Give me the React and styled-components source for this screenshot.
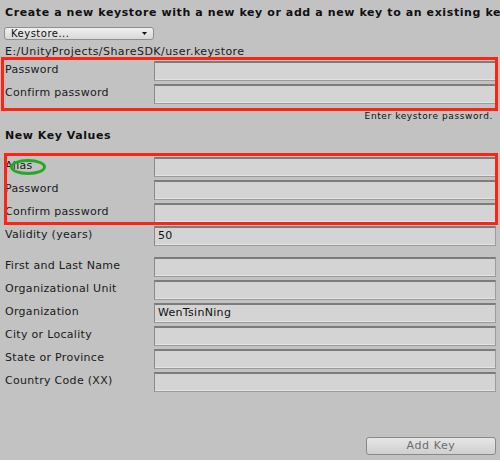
import React from 'react'
import styled, { createGlobalStyle } from 'styled-components'

const GlobalStyle = createGlobalStyle`
  html, body {
    margin: 0;
    padding: 0;
    background: #c2c2c2;
  }
  body {
    font-family: "DejaVu Sans", Verdana, sans-serif;
    font-size: 11px;
    letter-spacing: 0.3px;
    color: #1a1a1a;
  }
`;

const Window = styled.div`
  position: relative;
  width: 500px;
  height: 460px;
  overflow: hidden;
  background: #c2c2c2;
  display: flex;
  flex-direction: column;
  padding: 0 4px 0 5px;
  box-sizing: border-box;
`;

const Title = styled.div`
  margin-top: 4px;
  margin-right: -4px;
  height: 18px;
  line-height: 18px;
  font-weight: bold;
  font-size: 11px;
  letter-spacing: 0.6px;
  color: #111;
  white-space: nowrap;
  overflow: hidden;
`;

const Dropdown = styled.div`
  margin-top: 5px;
  margin-left: -1px;
  width: 150px;
  height: 13px;
  box-sizing: border-box;
  border: 1px solid #8e8e8e;
  border-radius: 3px;
  background: linear-gradient(#f0f0f0, #d8d8d8);
  display: flex;
  align-items: center;
  justify-content: space-between;
  padding: 0 6px 0 6px;
  font-size: 10px;
  letter-spacing: 0.5px;
  line-height: 11px;
  color: #111;
`;

const PathText = styled.div`
  margin-top: 5px;
  height: 14px;
  line-height: 14px;
  letter-spacing: 0.45px;
  white-space: nowrap;
`;

const Group = styled.div`
  display: flex;
  flex-direction: column;
  gap: 3px;
  margin-top: ${p => p.$top}px;
`;

const Row = styled.div`
  display: flex;
  align-items: center;
  height: 20px;
`;

const Label = styled.div`
  width: 149px;
  flex: none;
  line-height: 14px;
  margin-top: -2px;
  white-space: nowrap;
`;

const Field = styled.div`
  flex: 1;
  height: 20px;
  box-sizing: border-box;
  background: #d4d4d4;
  border-top: 2px solid #7c7c7c;
  border-left: 1px solid #8a8a8a;
  border-right: 1px solid #9c9c9c;
  border-bottom: 1px solid #9a9a9a;
  box-shadow: inset 0 -1px 0 #e4e4e4;
  padding: 0 3px;
  line-height: 16px;
  color: #111;
  white-space: nowrap;
`;

const Hint = styled.div`
  margin-top: 6px;
  height: 12px;
  line-height: 12px;
  font-size: 9px;
  letter-spacing: 0.6px;
  text-align: right;
  padding-right: 3px;
  color: #111;
`;

const SectionTitle = styled.div`
  margin-top: 7px;
  height: 14px;
  line-height: 14px;
  font-weight: bold;
  font-size: 11px;
  letter-spacing: 0.55px;
  color: #111;
`;

const Footer = styled.div`
  margin-top: 45px;
  display: flex;
  justify-content: flex-end;
`;

const Button = styled.div`
  width: 130px;
  height: 18px;
  box-sizing: border-box;
  border: 1px solid #8a8a8a;
  border-radius: 3px;
  background: linear-gradient(#e6e6e6, #cfcfcf);
  color: #6d6d6d;
  font-size: 11px;
  letter-spacing: 0.6px;
  line-height: 16px;
  text-align: center;
`;

const Marker = styled.div`
  position: absolute;
  left: ${p => p.$x}px;
  top: ${p => p.$y}px;
  width: ${p => p.$w}px;
  height: ${p => p.$h}px;
  box-sizing: border-box;
  border: 3px solid #ff2314;
  pointer-events: none;
`;

const Ellipse = styled.div`
  position: absolute;
  left: 10px;
  top: 159px;
  width: 36px;
  height: 16px;
  box-sizing: border-box;
  border: 3px solid #22aa22;
  border-radius: 50%;
  pointer-events: none;
`;

function FormRow({ label, value }) {
  return (
    <Row>
      <Label>{label}</Label>
      <Field>{value}</Field>
    </Row>
  )
}

export default function App() {
  return (
    <>
      <GlobalStyle />
      <Window>
        <Title>Create a new keystore with a new key or add a new key to an existing keys</Title>
        <Dropdown>
          <span>Keystore...</span>
          <svg width="5" height="3" viewBox="0 0 5 3">
            <path d="M0 0 H5 L2.5 3 Z" fill="#111" />
          </svg>
        </Dropdown>
        <PathText>E:/UnityProjects/ShareSDK/user.keystore</PathText>
        <Group $top={2}>
          <FormRow label="Password" />
          <FormRow label="Confirm password" />
        </Group>
        <Hint>Enter keystore password.</Hint>
        <SectionTitle>New Key Values</SectionTitle>
        <Group $top={14}>
          <FormRow label="Alias" />
          <FormRow label="Password" />
          <FormRow label="Confirm password" />
          <FormRow label="Validity (years)" value="50" />
        </Group>
        <Group $top={11}>
          <FormRow label="First and Last Name" />
          <FormRow label="Organizational Unit" />
          <FormRow label="Organization" value="WenTsinNing" />
          <FormRow label="City or Locality" />
          <FormRow label="State or Province" />
          <FormRow label="Country Code (XX)" />
        </Group>
        <Footer>
          <Button>Add Key</Button>
        </Footer>
        <Marker $x={1} $y={57} $w={497} $h={54} />
        <Marker $x={4} $y={153} $w={494} $h={72} />
        <Ellipse />
      </Window>
    </>
  )
}
